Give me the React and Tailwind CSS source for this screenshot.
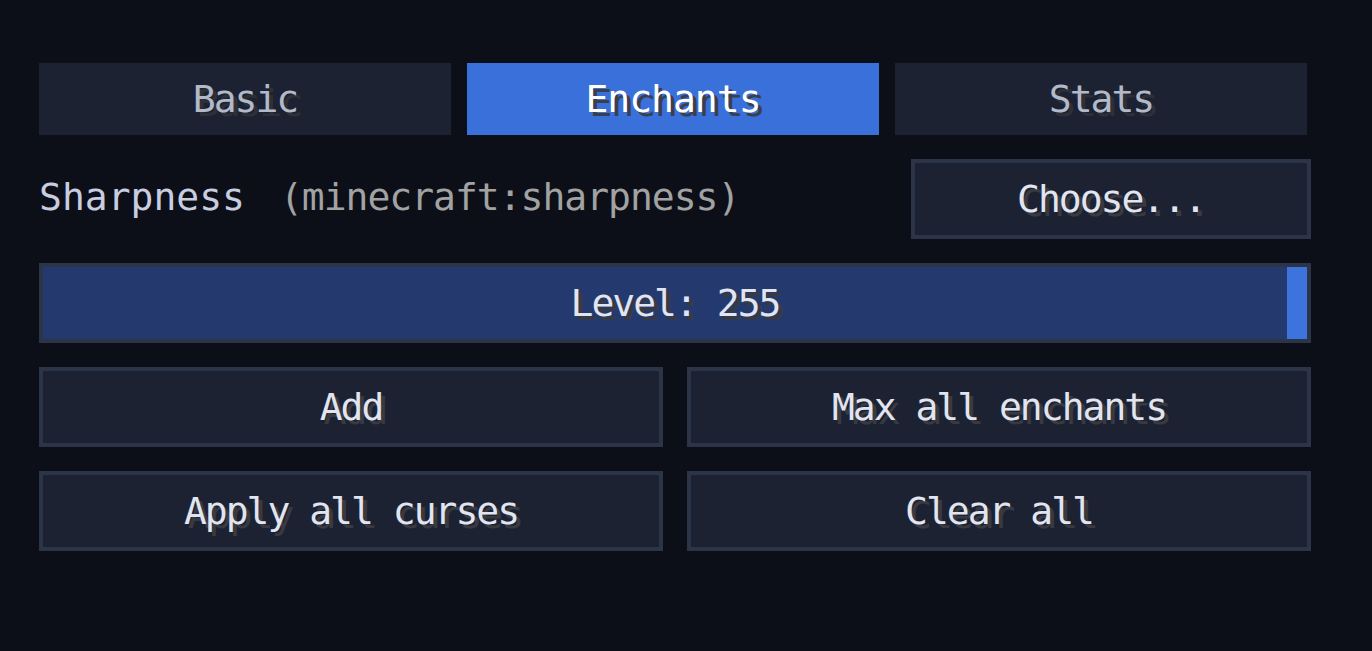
import React from "react";

const font = { fontFamily: '"DejaVu Sans Mono", "Liberation Mono", monospace' };

function Btn({ children, className = "" }) {
  return (
    <div
      className={`h-[80px] border-4 border-[#2c3547] bg-[#1c2232] flex items-center justify-center text-[38px] leading-none tracking-[-2px] text-[#e2e5f0] [text-shadow:4px_4px_0_#383a42] ${className}`}
    >
      {children}
    </div>
  );
}

export default function App() {
  return (
    <div className="w-[1372px] h-[651px] bg-[#0c0f18] pt-[63px] pl-[39px]" style={font}>
      <div className="w-[1272px] flex flex-col gap-6">
        <div className="w-[1268px] h-[72px] flex gap-4">
          <div className="flex-1 bg-[#1c2232] flex items-center justify-center text-[38px] leading-none tracking-[-2px] text-[#b2b9c9] [text-shadow:4px_4px_0_#2e3038]">
            Basic
          </div>
          <div className="flex-1 bg-[#3a70da] flex items-center justify-center text-[38px] leading-none tracking-[-1px] text-[#ffffff] [text-shadow:4px_4px_0_#3a3f4a]">
            Enchants
          </div>
          <div className="flex-1 bg-[#1c2232] flex items-center justify-center text-[38px] leading-none tracking-[-2px] text-[#b2b9c9] [text-shadow:4px_4px_0_#2e3038]">
            Stats
          </div>
        </div>

        <div className="h-[80px] flex items-center justify-between">
          <div className="flex items-center gap-[35px] text-[38px] leading-none pb-1">
            <span className="text-[#c9cde0]">Sharpness</span>
            <span className="text-[#a2a2a2] tracking-[-1px]">(minecraft:sharpness)</span>
          </div>
          <Btn className="w-[400px]">Choose...</Btn>
        </div>

        <div className="h-[80px] border-4 border-[#2c3547] bg-[#243a6e] flex">
          <div className="flex-1 flex items-center justify-center text-[38px] leading-none tracking-[-2px] text-[#e2e5f0] [text-shadow:4px_4px_0_#383a42] pl-5">
            Level: 255
          </div>
          <div className="w-5 bg-[#3c73dc]" />
        </div>

        <div className="grid grid-cols-2 gap-6">
          <Btn>Add</Btn>
          <Btn>Max all enchants</Btn>
        </div>
        <div className="grid grid-cols-2 gap-6">
          <Btn>Apply all curses</Btn>
          <Btn>Clear all</Btn>
        </div>
      </div>
    </div>
  );
}
